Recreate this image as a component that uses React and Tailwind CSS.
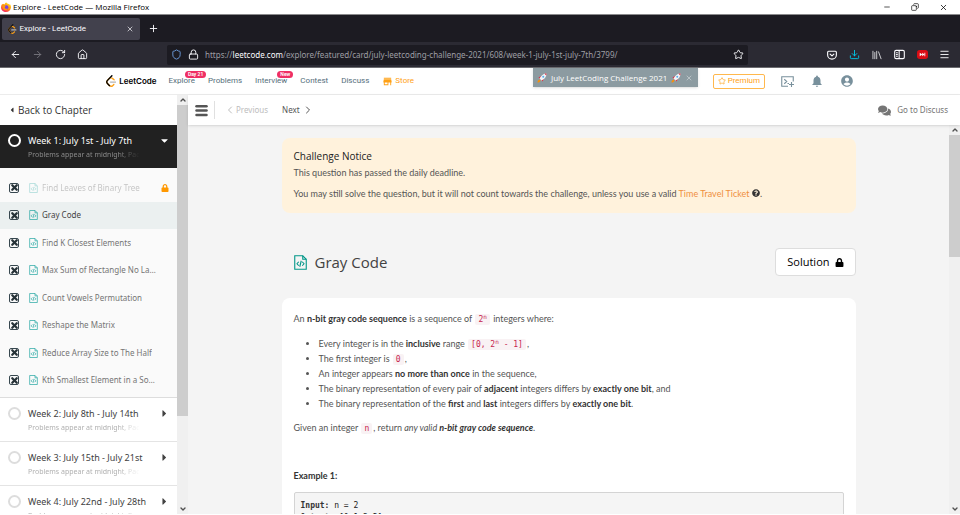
import React, { useState } from 'react';
import {
    ArrowLeft, ArrowRight, ChevronDown, ChevronLeft, ChevronRight, ChevronUp, Copy, Download,
    House, Lock, Menu, Minus, Plus, RotateCw, Shield, Star, X,
} from 'lucide-react';
import { FaCaretDown, FaCaretLeft, FaCaretRight, FaComments, FaLock, FaQuestionCircle } from 'react-icons/fa';
import { MdAccountCircle, MdNotifications, MdStore } from 'react-icons/md';

const NAV_LINKS = [
    { label: 'Explore', badge: 'Day 21' },
    { label: 'Problems' },
    { label: 'Interview', badge: 'New' },
    { label: 'Contest' },
    { label: 'Discuss' },
];

const PROBLEMS = [
    { title: 'Find Leaves of Binary Tree', locked: true },
    { title: 'Gray Code' },
    { title: 'Find K Closest Elements' },
    { title: 'Max Sum of Rectangle No Larger Than K' },
    { title: 'Count Vowels Permutation' },
    { title: 'Reshape the Matrix' },
    { title: 'Reduce Array Size to The Half' },
    { title: 'Kth Smallest Element in a Sorted Matrix' },
];

const WEEKS = ['Week 2: July 8th - July 14th', 'Week 3: July 15th - July 21st', 'Week 4: July 22nd - July 28th'];

function LeetCodeLogo({ className, dark = '#000' }) {
    return (
        <svg viewBox="0 0 95 111" className={className} aria-hidden="true">
            <path fill="#FFA116" d="M68.0063 83.0664C70.5 80.5764 74.5366 80.5829 77.0223 83.0809C79.508 85.579 79.5015 89.6226 77.0078 92.1127L65.9346 103.17C55.7187 113.371 39.06 113.519 28.6718 103.513C28.6117 103.456 23.9861 98.9201 8.72653 83.957C-1.42528 74.0029 -2.43665 58.0749 7.11648 47.8464L24.9282 28.7745C34.4095 18.6219 51.887 17.5122 62.7275 26.2789L78.9048 39.362C81.6444 41.5776 82.0723 45.5985 79.8606 48.3429C77.6488 51.0873 73.635 51.5159 70.8954 49.3003L54.7182 36.2173C49.0488 31.6325 39.1314 32.2622 34.2394 37.5006L16.4274 56.5727C11.7767 61.5522 12.2861 69.574 17.6456 74.8292C28.851 85.8169 37.4869 94.2846 37.4969 94.2942C42.8977 99.496 51.6304 99.4184 56.9331 94.1234L68.0063 83.0664Z" />
            <path fill="#B3B3B3" d="M41.1067 72.0014C37.5858 72.0014 34.7314 69.1421 34.7314 65.615C34.7314 62.0879 37.5858 59.2286 41.1067 59.2286H88.1245C91.6454 59.2286 94.4997 62.0879 94.4997 65.615C94.4997 69.1421 91.6454 72.0014 88.1245 72.0014H41.1067Z" />
            <path fill={dark} d="M49.9118 2.02335C52.3173 -0.55232 56.3517 -0.686894 58.9228 1.72277C61.494 4.13244 61.6284 8.17385 59.2229 10.7495L16.4276 56.5729C11.7768 61.552 12.2861 69.5738 17.6453 74.8292L37.4088 94.2091C39.9249 96.6764 39.968 100.72 37.505 103.24C35.042 105.761 31.0056 105.804 28.4895 103.337L8.72593 83.9567C-1.42529 74.0021 -2.43665 58.0741 7.1169 47.8463L49.9118 2.02335Z" />
        </svg>
    );
}

function FirefoxIcon() {
    return (
        <svg viewBox="0 0 20 20" className="size-[10px]" aria-hidden="true">
            <defs>
                <linearGradient id="fox" x1="0.8" y1="0" x2="0.2" y2="1">
                    <stop offset="0" stopColor="#ffe226" />
                    <stop offset="0.45" stopColor="#ff980e" />
                    <stop offset="1" stopColor="#f5156c" />
                </linearGradient>
            </defs>
            <path fill="url(#fox)" d="M10 1c1 0 2 1 2.500 2 3 .5 4.500 2 5 3 .3-.6.2-1.500 0-2C19.500 6 20 8.500 20 10.500 19.500 16 15.500 20 10 20S0 16 0 10.500C0 8 .8 5.500 2.500 3.500L3.500 5 5 3.500 7 5C7.500 3 8.500 1.800 10 1z" />
            <circle cx="10.500" cy="11" r="4.300" fill="#7542e5" />
            <path fill="#ff980e" d="M3 8c2-2 4-2 6.500-.5L8 10c-1 1 0 3 2 3.500 1.500.3 3-.2 4-1-1 3-4 4.500-7 3.500C4 15 2.500 11 3 8z" />
        </svg>
    );
}

function PocketIcon() {
    return (
        <svg viewBox="0 0 16 16" className="size-[10px]" fill="none" stroke="currentColor" strokeWidth="1.800" strokeLinecap="round" strokeLinejoin="round">
            <path d="M2.500 2h11A1.500 1.500 0 0 1 15 3.500V8A7 6.500 0 0 1 1 8V3.500A1.500 1.500 0 0 1 2.500 2z" />
            <path d="M5 6.500l3 3 3-3" />
        </svg>
    );
}

function LibraryIcon() {
    return (
        <svg viewBox="0 0 16 16" className="size-[10px]" fill="none" stroke="currentColor" strokeWidth="1.600" strokeLinecap="round">
            <path d="M1.500 2v12M4.500 4v10M7.500 2v12M10.500 3l4 11" />
        </svg>
    );
}

function SidebarIcon() {
    return (
        <svg viewBox="0 0 16 16" className="size-[11px]" fill="none" stroke="currentColor" strokeWidth="1.600">
            <rect x="1" y="2" width="14" height="12" rx="2" />
            <path d="M7.500 2v12M3 5.500h2.500M3 8h2.500M3 10.500h2.500" />
        </svg>
    );
}

function SkipIcon() {
    return (
        <svg viewBox="0 0 20 16" className="w-[11px] h-[9px]">
            <rect width="20" height="16" rx="5" fill="#d90c14" />
            <path fill="#fff" d="M5 5l4.500 3L5 11zM9.500 5l4 3-4 3zM13.500 5h1.500v6h-1.500z" />
        </svg>
    );
}

function PlaygroundIcon() {
    return (
        <svg viewBox="0 0 26 22" className="w-[13px] h-[11px]" fill="none" stroke="currentColor" strokeWidth="2.200">
            <path d="M24.500 11V1.500H1.500v19H14" />
            <path d="M6.500 6.500l5 4.500-5 4.500M13 15h3M21 12v10M16 17h10" />
        </svg>
    );
}

function CodeFileIcon({ className }) {
    return (
        <svg viewBox="0 0 26 30" className={className} fill="none" stroke="currentColor" strokeWidth="2.200">
            <path d="M1.500 1.500h16l7 7v20h-23z" />
            <path d="M17.500 1.500v7h7" />
            <path d="M9.500 13.500L6 17.500l3.500 4M16.500 13.500l3.500 4-3.500 4M14.500 11.500l-3 12" />
        </svg>
    );
}

function RocketIcon() {
    return (
        <svg viewBox="0 0 20 20" className="size-[10px]" aria-hidden="true">
            <path fill="#dd2e44" d="M3 9l5-3 6 6-3 5-2-3-4-3z" />
            <path fill="#f4900c" d="M1 19c0-3 1-5 4-6l2 2c-1 3-3 4-6 4z" />
            <path fill="#f1f4f6" d="M19 1c-6 0-11 4-14 10l4 4C16 12 19 7 19 1z" />
            <path fill="#dd2e44" d="M19 1c-2 0-3 .2-4 .7L18.300 5c.5-1 .7-2 .7-4z" />
            <circle cx="12.500" cy="7.500" r="2" fill="#55acee" />
        </svg>
    );
}

function ScrollBar({ thumb }) {
    return (
        <div className="flex w-[11px] shrink-0 flex-col bg-[#f0f0f0] text-[#505050]">
            <button aria-label="Scroll up" className="grid h-[10px] place-items-center"><ChevronUp className="size-2" strokeWidth={4} /></button>
            <div className="min-h-0 flex-1"><div className={`bg-[#cdcdcd] ${thumb}`} /></div>
            <button aria-label="Scroll down" className="grid h-[10px] place-items-center"><ChevronDown className="size-2" strokeWidth={4} /></button>
        </div>
    );
}

function Browser() {
    return (
        <div className="shrink-0 text-[8px]">
            <div className="flex h-[15px] items-center border-b border-[#8a8a8c] bg-white pr-3 pl-px text-black">
                <FirefoxIcon />
                <span className="ml-[2px] font-['Open_Sans',sans-serif]">Explore - LeetCode — Mozilla Firefox</span>
                <div className="ml-auto flex items-center gap-5">
                    <button aria-label="Minimize"><Minus className="size-2" /></button>
                    <button aria-label="Restore"><Copy className="size-2 rotate-90" /></button>
                    <button aria-label="Close"><X className="size-[9px]" /></button>
                </div>
            </div>
            <div className="flex h-[27px] items-center bg-[#1c1b22] pl-[2px] text-[#fbfbfe]">
                <div className="flex h-[22px] w-[138px] items-center rounded-[2px] bg-[#42414d] px-[6px] font-['Roboto',sans-serif]">
                    <LeetCodeLogo className="h-[10px]" dark="#111" />
                    <span className="ml-[3px]">Explore - LeetCode</span>
                    <button aria-label="Close tab" className="ml-auto"><X className="size-2" /></button>
                </div>
                <button aria-label="New tab" className="ml-2"><Plus className="size-[11px]" /></button>
            </div>
            <div className="flex h-[26px] items-center border-b border-[#6c6c70] bg-[#2b2a33] px-1 text-[#fbfbfe]">
                <div className="grid w-[90px] grid-cols-4 place-items-center">
                    <button aria-label="Back"><ArrowLeft className="size-[11px]" /></button>
                    <button aria-label="Forward" className="text-[#77767e]"><ArrowRight className="size-[11px]" /></button>
                    <button aria-label="Reload"><RotateCw className="size-[11px]" /></button>
                    <button aria-label="Home"><House className="size-[11px]" /></button>
                </div>
                <div className="mx-[73px] flex h-5 flex-1 items-center rounded-[2px] bg-[#1c1b22] px-1">
                    <Shield className="size-[11px] text-[#6d9fe0]" />
                    <Lock className="ml-[6px] size-[11px]" />
                    <span className="ml-[6px] text-[#9e9ea4]">
                        https://<span className="text-[#fbfbfe]">leetcode.com</span>/explore/featured/card/july-leetcoding-challenge-2021/608/week-1-july-1st-july-7th/3799/
                    </span>
                    <button aria-label="Bookmark" className="ml-auto"><Star className="size-[11px]" /></button>
                </div>
                <div className="grid w-[135px] grid-cols-6 place-items-center">
                    <button aria-label="Pocket"><PocketIcon /></button>
                    <button aria-label="Downloads" className="text-[#00c8e8]"><Download className="size-[11px]" /></button>
                    <button aria-label="Library" className="text-[#c8c8cc]"><LibraryIcon /></button>
                    <button aria-label="Sidebars"><SidebarIcon /></button>
                    <button aria-label="Skip"><SkipIcon /></button>
                    <button aria-label="Menu"><Menu className="size-[11px]" /></button>
                </div>
            </div>
        </div>
    );
}

function Header() {
    const [showBanner, setShowBanner] = useState(true);

    return (
        <header className="shrink-0 border-b border-[#ececec] bg-white">
            <div className="mx-auto flex h-[26px] max-w-[748px] items-center font-['Roboto',sans-serif] text-[8px] text-[#546e7a]">
                <a href="#" className="flex items-center gap-[3px] font-['Inter',sans-serif] font-semibold text-black">
                    <LeetCodeLogo className="h-3" />
                    LeetCode
                </a>
                <nav className="ml-3 flex items-center gap-[13px]">
                    {NAV_LINKS.map((link) => (
                        <a key={link.label} href="#" className="relative">
                            {link.label}
                            {link.badge && (
                                <span className="absolute -top-1 left-full -ml-[10px] rounded-full bg-[#ef2f64] px-[3px] text-[5px] leading-[7px] font-semibold whitespace-nowrap text-white">
                                    {link.badge}
                                </span>
                            )}
                        </a>
                    ))}
                    <a href="#" className="flex items-center gap-[2px] text-[#ffa116]">
                        <MdStore className="size-[11px]" />
                        Store
                    </a>
                </nav>
                <div className="ml-auto flex items-center self-stretch">
                    {showBanner && (
                        <div className="flex h-[19px] w-[165px] items-center justify-center gap-1 self-start bg-[#8c9ba1] font-['Open_Sans',sans-serif] text-white shadow-sm">
                            <RocketIcon />
                            <span>July LeetCoding Challenge 2021</span>
                            <RocketIcon />
                            <button aria-label="Dismiss" onClick={() => setShowBanner(false)} className="text-[#d0d7da]"><X className="size-2" /></button>
                        </div>
                    )}
                    <a href="#" className="ml-[15px] flex h-[15px] items-center gap-[2px] rounded-[2px] border border-[#ffb84d] px-1 text-[#ffa116]">
                        <Star className="size-2" />
                        Premium
                    </a>
                    <button aria-label="Playground" className="ml-4 text-[#78909c]"><PlaygroundIcon /></button>
                    <button aria-label="Notifications" className="ml-4 text-[#78909c]"><MdNotifications className="size-[14px]" /></button>
                    <button aria-label="Account" className="ml-4 text-[#78909c]"><MdAccountCircle className="size-[14px]" /></button>
                </div>
            </div>
        </header>
    );
}

function Week({ title, open }) {
    const Caret = open ? FaCaretDown : FaCaretRight;

    return (
        <button
            className={`grid w-full grid-cols-[20px_131px_10px] content-center items-center pl-2 text-left ${open ? 'h-[43px] bg-[#212121] text-white' : 'h-[44px] border-b border-[#e4e4e4] bg-white text-[#424242]'}`}
        >
            <span className={`size-[13px] rounded-full border-2 ${open ? 'border-white' : 'border-[#ddd]'}`} />
            <span className="text-[9px] leading-4 whitespace-nowrap">{title}</span>
            <Caret className="size-[11px]" />
            <span className={`col-start-2 w-[112px] overflow-hidden text-[7px] leading-3 whitespace-nowrap [mask-image:linear-gradient(to_right,black_80%,transparent)] ${open ? 'text-[#8a8a8a]' : 'text-[#b0b0b0]'}`}>
                Problems appear at midnight, Pacific Time
            </span>
        </button>
    );
}

function Sidebar({ selected, onSelect }) {
    return (
        <aside className="flex w-[188px] shrink-0">
            <div className="min-w-0 flex-1 overflow-hidden">
                <a href="#" className="flex h-[30px] items-center gap-[2px] pl-2 font-['Open_Sans',sans-serif] text-[10px] font-medium text-[#333]">
                    <FaCaretLeft className="size-2" />
                    Back to Chapter
                </a>
                <Week title="Week 1: July 1st - July 7th" open />
                <div className="border-b border-[#ddd] bg-[#fafafa] pt-[6px] pb-[3px]">
                    <ul className="grid h-[220px] auto-rows-fr text-[8px]">
                        {PROBLEMS.map((problem) => (
                            <li
                                key={problem.title}
                                className={`flex items-center pr-2 pl-[9px] ${selected === problem.title ? 'bg-[#ebf0f0] text-[#424242]' : 'text-[#757575]'}`}
                            >
                                <span className="grid place-items-center text-[#263238]">
                                    <input type="checkbox" defaultChecked aria-label={problem.title} className="col-start-1 row-start-1 size-[10px] appearance-none rounded-[2px] border border-[#37474f]" />
                                    <X className="pointer-events-none col-start-1 row-start-1 size-[9px]" strokeWidth={6} />
                                </span>
                                <a
                                    href="#"
                                    onClick={() => onSelect(problem.title)}
                                    className={`ml-[10px] flex w-[127px] items-center gap-1 ${problem.locked ? 'opacity-40' : ''}`}
                                >
                                    <CodeFileIcon className="h-[10px] w-[9px] shrink-0 text-[#2aa9a4]" />
                                    <span className="truncate">{problem.title}</span>
                                </a>
                                {problem.locked && <FaLock className="ml-auto size-2 text-[#ff9800]" />}
                            </li>
                        ))}
                    </ul>
                </div>
                {WEEKS.map((week) => <Week key={week} title={week} />)}
            </div>
            <ScrollBar thumb="h-[78%]" />
        </aside>
    );
}

function Code({ children }) {
    return <code className="mx-px rounded-[2px] bg-[#f9f2f4] px-[3px] py-px font-['DejaVu_Sans_Mono',monospace] text-[8px] leading-none text-[#c7254e]">{children}</code>;
}

function Pow() {
    return <sup className="-top-[3px] text-[6px]">n</sup>;
}

function Problem({ title }) {
    return (
        <div className="mx-auto w-full max-w-[574px] pt-[13px] font-['Lato',sans-serif]">
            <section className="rounded-lg bg-[#fff2dc] px-3 pt-[10px] pb-[11px] text-[9px] text-[#555]">
                <h2 className="font-['Open_Sans',sans-serif] text-[10px] leading-4 text-[#212121]">Challenge Notice</h2>
                <p className="mt-px leading-4">This question has passed the daily deadline.</p>
                <p className="mt-[5px] leading-4">
                    You may still solve the question, but it will not count towards the challenge, unless you use a valid{' '}
                    <a href="#" className="text-[#ef8f3c]">Time Travel Ticket</a>{' '}
                    <FaQuestionCircle className="inline size-2 align-baseline text-[#333]" />.
                </p>
            </section>

            <div className="mt-[35px] flex h-7 items-center pl-3 font-['Open_Sans',sans-serif]">
                <CodeFileIcon className="h-[15px] w-[13px] text-[#009688]" />
                <h1 className="ml-2 text-[15px] font-medium text-[#424242]">{title}</h1>
                <button className="ml-auto flex h-7 items-center gap-[5px] rounded-[4px] border border-[#ddd] bg-white px-[11px] text-[11px] text-black">
                    Solution
                    <FaLock className="size-[9px]" />
                </button>
            </div>

            <article className="mt-[22px] rounded-t-lg bg-white px-3 pt-[13px] text-[9px] leading-[15px] text-[#555] [&_b]:font-bold [&_b]:text-[#333]">
                <p>An <b>n-bit gray code sequence</b> is a sequence of <Code>2<Pow /></Code> integers where:</p>
                <ul className="mt-[10px] list-disc pl-[25px]">
                    <li>Every integer is in the <b>inclusive</b> range <Code>[0, 2<Pow /> - 1]</Code>,</li>
                    <li>The first integer is <Code>0</Code>,</li>
                    <li>An integer appears <b>no more than once</b> in the sequence,</li>
                    <li>The binary representation of every pair of <b>adjacent</b> integers differs by <b>exactly one bit</b>, and</li>
                    <li>The binary representation of the <b>first</b> and <b>last</b> integers differs by <b>exactly one bit</b>.</li>
                </ul>
                <p className="mt-[9px]">Given an integer <Code>n</Code>, return <i>any valid <b>n-bit gray code sequence</b></i>.</p>
                <p className="mt-[33px]"><b>Example 1:</b></p>
                <pre className="mt-[9px] rounded-[2px] border border-[#d4d4d4] bg-[#f5f5f5] px-[6px] py-[7px] font-['DejaVu_Sans_Mono',monospace] text-[8px] leading-[12px] text-[#222]">
                    <b>Input:</b>{' n = 2\n'}
                    <b>Output:</b>{' [0,1,3,2]\n'}
                </pre>
            </article>
        </div>
    );
}

export default function App() {
    const [selected, setSelected] = useState('Gray Code');

    return (
        <div className="flex h-screen flex-col overflow-hidden bg-white pb-px font-['Noto_Sans',sans-serif]">
            <Browser />
            <Header />
            <div className="flex min-h-0 flex-1">
                <Sidebar selected={selected} onSelect={setSelected} />
                <div className="flex min-w-0 flex-1 flex-col">
                    <div className="z-10 flex h-[30px] shrink-0 items-center bg-white pr-3 pl-[6px] text-[8px] text-[#555] shadow-sm">
                        <button aria-label="Toggle sidebar"><Menu className="size-[15px]" strokeWidth={4} /></button>
                        <span className="ml-[5px] h-[18px] w-px bg-[#e0e0e0]" />
                        <button className="ml-[9px] flex items-center text-[#bdbdbd]"><ChevronLeft className="size-3" />Previous</button>
                        <button className="ml-[14px] flex items-center gap-[2px]">Next<ChevronRight className="size-3" /></button>
                        <a href="#" className="ml-auto flex items-center gap-[6px] text-[#757575]"><FaComments className="size-[13px]" />Go to Discuss</a>
                    </div>
                    <div className="flex min-h-0 flex-1">
                        <main className="min-w-0 flex-1 overflow-hidden bg-[#f4f4f4]">
                            <Problem title={selected} />
                        </main>
                        <ScrollBar thumb="h-[33%]" />
                    </div>
                </div>
            </div>
        </div>
    );
}
